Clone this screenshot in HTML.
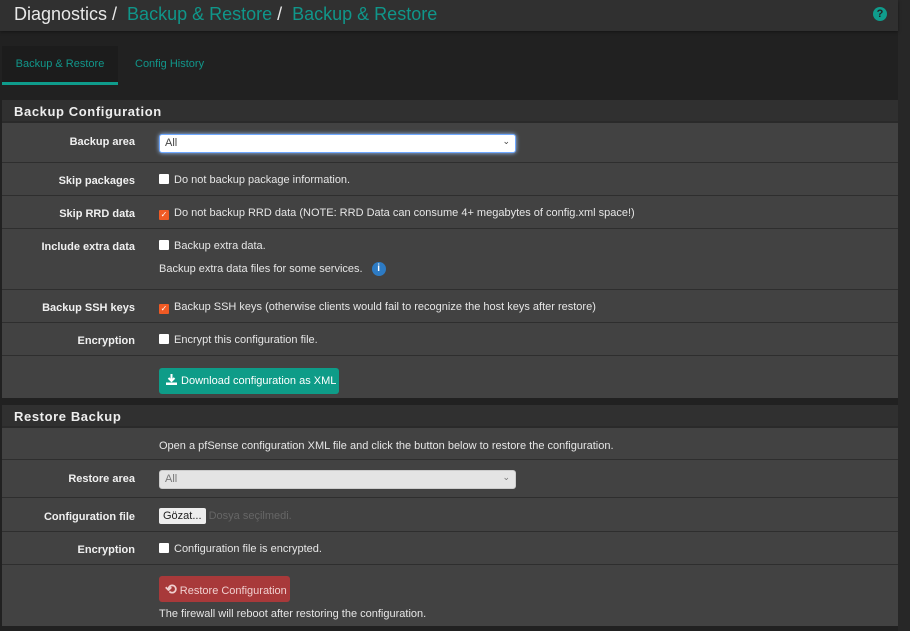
<!DOCTYPE html>
<html><head><meta charset="utf-8"><style>
*{box-sizing:border-box;margin:0;padding:0}
body{width:910px;height:631px;overflow:hidden;background:#212121;font-family:"Liberation Sans",sans-serif;color:#e0e0e0;position:relative}
.strip{position:absolute;left:898px;top:0;width:12px;height:631px;background:#272727}
.hdr{position:absolute;left:0;top:0;width:898px;height:31px;background:#303030;box-shadow:0 1px 3px rgba(0,0,0,.4)}
.hdr .t{position:absolute;left:14px;top:4px;font-size:18px;color:#e8e8e8}
.hdr .t span{color:#10968a}
.help{position:absolute;left:873px;top:7px;width:14px;height:14px;border-radius:50%;background:#0f9c8c;color:#222;font-size:11px;font-weight:bold;text-align:center;line-height:14px}
.tab{position:absolute;top:46px;height:39px;font-size:11px;color:#11968a;line-height:37px}
.tab.a{left:2px;width:116px;background:#1c1c1c;text-align:center;border-bottom:3px solid #0f9c8c}
.panel{position:absolute;left:2px;width:896px;background:#424242}
.ph{height:23px;background:#303030;border-bottom:2px solid #2a2a2a;font-size:13px;font-weight:bold;letter-spacing:.6px;padding:4px 12px;color:#eee}
.row{position:absolute;left:0;width:896px;border-top:1px solid #2e2e2e;font-size:11px}
.lbl{position:absolute;right:763px;font-weight:bold;color:#f0f0f0;white-space:nowrap}
.c{position:absolute;left:157px;white-space:nowrap;color:#e6e6e6}
.cb{display:inline-block;width:10px;height:10px;background:#fff;border-radius:1px;vertical-align:-1px;margin-right:5px}
.cb.k{background:#f05a24;color:#fff;font-size:8px;line-height:10px;text-align:center}
.sel{position:absolute;left:157px;width:357px;height:19px;border-radius:3px;font-size:11px;padding:2px 5px;color:#555}
.btn{position:absolute;left:157px;height:26px;border-radius:3px;font-size:11px;color:#fff;padding:0 6px;line-height:26px;white-space:nowrap}
</style></head><body>
<div class="strip"></div>
<div class="hdr"><div class="t">Diagnostics / &nbsp;<span>Backup &amp; Restore</span> / &nbsp;<span>Backup &amp; Restore</span></div><div class="help">?</div></div>
<div class="tab a">Backup &amp; Restore</div>
<div class="tab" style="left:135px">Config History</div>

<div class="panel" style="top:100px;height:298px">
<div class="ph">Backup Configuration</div>
<div class="row" style="top:23px;height:39px;border-top:none"><div class="lbl" style="top:13px">Backup area</div><div class="sel" style="top:11px;background:#fff;border:1px solid #6ea8ff;box-shadow:0 0 4px #9bc4ff;color:#444">All<span style="position:absolute;right:5px;top:1px;font-size:9px">&#8964;</span></div></div>
<div class="row" style="top:62px;height:33px"><div class="lbl" style="top:12px">Skip packages</div><div class="c" style="top:11px"><span class="cb"></span>Do not backup package information.</div></div>
<div class="row" style="top:95px;height:33px"><div class="lbl" style="top:12px">Skip RRD data</div><div class="c" style="top:11px"><span class="cb k">✓</span>Do not backup RRD data (NOTE: RRD Data can consume 4+ megabytes of config.xml space!)</div></div>
<div class="row" style="top:128px;height:61px"><div class="lbl" style="top:12px">Include extra data</div><div class="c" style="top:11px"><span class="cb"></span>Backup extra data.</div><div class="c" style="top:33px">Backup extra data files for some services. <span style="display:inline-block;width:14px;height:14px;border-radius:50%;background:#2d7bc4;color:#fff;font-size:10px;font-weight:bold;text-align:center;line-height:14px;margin-left:6px;vertical-align:1px">i</span></div></div>
<div class="row" style="top:189px;height:33px"><div class="lbl" style="top:12px">Backup SSH keys</div><div class="c" style="top:11px"><span class="cb k">✓</span>Backup SSH keys (otherwise clients would fail to recognize the host keys after restore)</div></div>
<div class="row" style="top:222px;height:33px"><div class="lbl" style="top:12px">Encryption</div><div class="c" style="top:11px"><span class="cb"></span>Encrypt this configuration file.</div></div>
<div class="row" style="top:255px;height:43px"><div class="btn" style="top:12px;background:#0e9c88;width:180px"><svg width="13" height="13" viewBox="0 0 13 13" style="vertical-align:-2px"><path d="M6.5 1v7M3.5 5l3 3 3-3" stroke="#fff" stroke-width="2" fill="none"/><rect x="1" y="9.5" width="11" height="2.5" fill="#fff"/></svg> Download configuration as XML</div></div>
</div>

<div class="panel" style="top:405px;height:221px">
<div class="ph">Restore Backup</div>
<div class="row" style="top:23px;height:31px;border-top:none"><div class="c" style="top:12px">Open a pfSense configuration XML file and click the button below to restore the configuration.</div></div>
<div class="row" style="top:54px;height:38px"><div class="lbl" style="top:13px">Restore area</div><div class="sel" style="top:10px;background:#e4e4e4;border:1px solid #ccc;color:#777">All<span style="position:absolute;right:5px;top:1px;font-size:9px">&#8964;</span></div></div>
<div class="row" style="top:92px;height:34px"><div class="lbl" style="top:13px">Configuration file</div><div class="c" style="top:10px"><span style="display:inline-block;background:#eee;color:#222;border-radius:2px;padding:2px 4px">Gözat...</span> <span style="color:#666">Dosya seçilmedi.</span></div></div>
<div class="row" style="top:126px;height:33px"><div class="lbl" style="top:12px">Encryption</div><div class="c" style="top:11px"><span class="cb"></span>Configuration file is encrypted.</div></div>
<div class="row" style="top:159px;height:62px"><div class="btn" style="top:11px;background:#a8393a;color:#f0d0d0;width:131px"><b style="font-size:14px">&#10226;</b> Restore Configuration</div><div class="c" style="top:43px">The firewall will reboot after restoring the configuration.</div></div>
</div>
</body></html>
